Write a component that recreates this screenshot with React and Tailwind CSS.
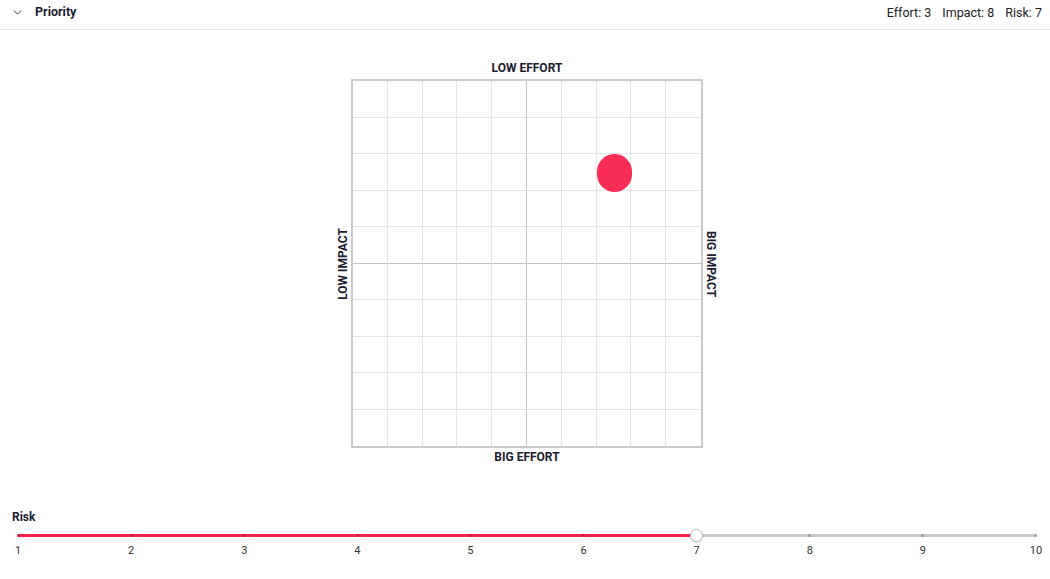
import React from 'react';
import { ChevronDown } from 'lucide-react';

const effort = 3;
const impact = 8;
const risk = 7;

const cells = Array.from({ length: 100 }, (_, i) => ({ row: Math.floor(i / 10) + 1, col: (i % 10) + 1 }));

const cellClass = ({ row, col }) => {
    const classes = ['flex'];
    if (col < 10) classes.push(col === 5 ? 'border-r border-r-[#c4c4c4]' : 'border-r border-r-[#e4e4e4]');
    if (row < 10) classes.push(row === 5 ? 'border-b border-b-[#c4c4c4]' : 'border-b border-b-[#e4e4e4]');
    return classes.join(' ');
};

const Matrix = () => (
    <div className="flex flex-col items-center pt-[31px]">
        <div className="text-[12px] font-bold leading-[14px] text-[#1c2030] h-[18px] ml-[4px]">LOW EFFORT</div>
        <div className="flex items-center ml-[4px]">
            <div className="w-[14px] mr-[1px] flex justify-center">
                <span className="-rotate-90 whitespace-nowrap text-[12px] font-bold text-[#1c2030]">LOW IMPACT</span>
            </div>
            <div className="w-[352px] h-[369px] border-2 border-[#c9c9c9] grid grid-cols-10 grid-rows-10">
                {cells.map((cell) => (
                    <div key={`${cell.row}-${cell.col}`} className={cellClass(cell)}>
                        {cell.row === effort && cell.col === impact && (
                            <div className="w-[calc(100%+2px)] h-[calc(100%+2px)] shrink-0 rounded-full bg-[#f72d55]" />
                        )}
                    </div>
                ))}
            </div>
            <div className="w-[14px] ml-[1px] flex justify-center">
                <span className="rotate-90 whitespace-nowrap text-[12px] font-bold text-[#1c2030]">BIG IMPACT</span>
            </div>
        </div>
        <div className="text-[12px] font-bold leading-[14px] text-[#1c2030] mt-[2px] ml-[4px]">BIG EFFORT</div>
    </div>
);

const RiskSlider = () => {
    const pct = ((risk - 1) / 9) * 100;
    return (
        <div className="mt-[46px] pl-[12px]">
            <div className="text-[12px] font-bold text-[#1c2030] leading-[14px]">Risk</div>
            <div className="ml-[6px] mr-[14px] mt-[10px]">
                <div className="relative h-[3px] bg-[#c8c8c8] rounded-full">
                    <div className="h-full bg-[#f3224d] rounded-full" style={{ width: `${pct}%` }} />
                    <div className="absolute inset-0 flex justify-between items-center">
                        {Array.from({ length: 10 }, (_, i) => (
                            <div key={i} className="w-0 flex justify-center">
                                <span className={`block w-[3px] h-[3px] rounded-full shrink-0 ${i + 1 < risk ? 'bg-[#c51a3d]' : 'bg-[#9a9a9a]'}`} />
                            </div>
                        ))}
                    </div>
                    <div
                        className="absolute top-1/2 w-[13px] h-[13px] -ml-[6.5px] -mt-[6.5px] rounded-full bg-white border border-[#bdbdbd] shadow-sm"
                        style={{ left: `${pct}%` }}
                    />
                </div>
                <div className="flex justify-between mt-[7px]">
                    {Array.from({ length: 10 }, (_, i) => (
                        <div key={i} className="w-0 flex justify-center">
                            <span className="text-[11px] leading-[13px] text-[#333] whitespace-nowrap">{i + 1}</span>
                        </div>
                    ))}
                </div>
            </div>
        </div>
    );
};

export default function App() {
    return (
        <div className="w-[1050px] h-[579px] bg-white font-['Roboto',sans-serif] overflow-hidden">
            <div className="h-[30px] flex items-start justify-between border-b border-[#e6e6e6] pl-[11px] pr-[8px] pt-[4px]">
                <div className="flex items-center h-[17px]">
                    <ChevronDown size={13} strokeWidth={1.6} className="text-[#1c2030]" />
                    <span className="ml-[11px] text-[12.5px] font-bold text-[#1c2030]">Priority</span>
                </div>
                <div className="text-[12.5px] leading-[17px] text-[#222] flex gap-[11px]">
                    <span>Effort: {effort}</span>
                    <span>Impact: {impact}</span>
                    <span>Risk: {risk}</span>
                </div>
            </div>
            <Matrix />
            <RiskSlider />
        </div>
    );
}
